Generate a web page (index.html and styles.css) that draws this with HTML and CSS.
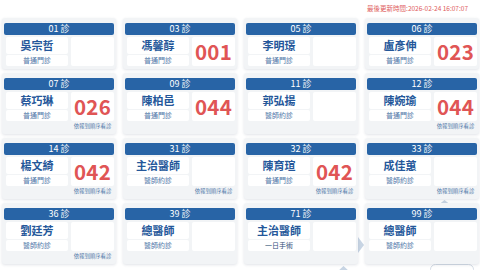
FILE: index.html
```html
<!DOCTYPE html>
<html lang="zh-Hant">
<head>
<meta charset="utf-8">
<title>門診看診進度</title>
<link rel="stylesheet" href="styles.css">
</head>
<body>
<svg class="deco" width="480" height="270" viewBox="0 0 480 270" aria-hidden="true">
  <polygon points="437,206 444.5,200 452,206" fill="#c8d5e4"/>
  <polygon points="358,237 364,245 358,253" fill="#c8d5e4"/>
  <polygon points="337,272 343.5,266 350,272" fill="#c8d5e4"/>
  <rect x="430.5" y="264.5" width="43" height="14" rx="5" fill="none" stroke="#d6dde6"/>
</svg>
<div class="topbar"><span class="updated">最後更新時間:2026-02-24 16:07:07</span></div>
<main class="grid">
  <section class="card"><div class="head">01 診</div><div class="body"><div class="name">吳宗哲</div><div class="type">普通門診</div><div class="num"></div></div></section>
  <section class="card"><div class="head">03 診</div><div class="body"><div class="name">馮馨醇</div><div class="type">普通門診</div><div class="num">001</div></div></section>
  <section class="card"><div class="head">05 診</div><div class="body"><div class="name">李明璟</div><div class="type">普通門診</div><div class="num"></div></div></section>
  <section class="card"><div class="head">06 診</div><div class="body"><div class="name">盧彥伸</div><div class="type">普通門診</div><div class="num">023</div></div></section>

  <section class="card"><div class="head">07 診</div><div class="body"><div class="name">蔡巧琳</div><div class="type">普通門診</div><div class="num">026</div></div><div class="note">依報到順序看診</div></section>
  <section class="card"><div class="head">09 診</div><div class="body"><div class="name">陳柏邑</div><div class="type">普通門診</div><div class="num">044</div></div></section>
  <section class="card"><div class="head">11 診</div><div class="body"><div class="name">郭弘揚</div><div class="type">醫師約診</div><div class="num"></div></div></section>
  <section class="card"><div class="head">12 診</div><div class="body"><div class="name">陳婉瑜</div><div class="type">普通門診</div><div class="num">044</div></div><div class="note">依報到順序看診</div></section>

  <section class="card"><div class="head">14 診</div><div class="body"><div class="name">楊文綺</div><div class="type">普通門診</div><div class="num">042</div></div><div class="note">依報到順序看診</div></section>
  <section class="card"><div class="head">31 診</div><div class="body"><div class="name">主治醫師</div><div class="type">醫師約診</div><div class="num"></div></div><div class="note">依報到順序看診</div></section>
  <section class="card"><div class="head">32 診</div><div class="body"><div class="name">陳育瑄</div><div class="type">普通門診</div><div class="num">042</div></div><div class="note">依報到順序看診</div></section>
  <section class="card"><div class="head">33 診</div><div class="body"><div class="name">成佳蕙</div><div class="type">醫師約診</div><div class="num"></div></div><div class="note">依報到順序看診</div></section>

  <section class="card"><div class="head">36 診</div><div class="body"><div class="name">劉廷芳</div><div class="type">醫師約診</div><div class="num"></div></div><div class="note">依報到順序看診</div></section>
  <section class="card"><div class="head">39 診</div><div class="body"><div class="name">總醫師</div><div class="type">醫師約診</div><div class="num"></div></div></section>
  <section class="card"><div class="head">71 診</div><div class="body"><div class="name">主治醫師</div><div class="type dark">一日手術</div><div class="num"></div></div></section>
  <section class="card"><div class="head">99 診</div><div class="body"><div class="name">總醫師</div><div class="type">醫師約診</div><div class="num"></div></div></section>
</main>
</body>
</html>
```

FILE: styles.css
```css
* { box-sizing: border-box; }
html, body { margin: 0; padding: 0; }
body {
  width: 480px;
  height: 270px;
  overflow: hidden;
  background: #ffffff;
  font-family: "Noto Sans CJK TC", "Noto Sans", sans-serif;
  position: relative;
}
.deco {
  position: absolute;
  left: 0;
  top: 0;
  z-index: 0;
}
.topbar {
  position: relative;
  z-index: 1;
  height: 18px;
  padding: 4px 12px 0 0;
  display: flex;
  justify-content: flex-end;
}
.updated {
  font-size: 6.5px;
  line-height: 8px;
  color: #e05d5d;
}
.grid {
  position: relative;
  z-index: 1;
  display: grid;
  grid-template-columns: repeat(4, 114px);
  column-gap: 7px;
  row-gap: 4px;
  padding: 0 0 0 2px;
}
.card {
  background: #f2f4f6;
  border-radius: 3px;
  box-shadow: 0 1px 3px rgba(40, 60, 90, 0.14);
  padding: 5px 2px 3px 2px;
  display: flex;
  flex-direction: column;
}
.head {
  height: 12px;
  background: #2864a6;
  border-radius: 2px;
  color: #ffffff;
  font-size: 9px;
  line-height: 12px;
  text-align: center;
}
.body {
  margin-top: 2px;
  padding-left: 2px;
  display: grid;
  grid-template-columns: 62px 43px;
  grid-template-rows: 17px 11px;
  column-gap: 3px;
  row-gap: 1px;
}
.name {
  background: #ffffff;
  border-radius: 2px;
  color: #24579a;
  font-weight: 700;
  font-size: 11px;
  line-height: 17px;
  text-align: center;
}
.type {
  background: #ffffff;
  border-radius: 2px;
  color: #4f77a8;
  font-size: 7px;
  line-height: 11px;
  text-align: center;
}
.type.dark { color: #2e4f78; }
.num {
  grid-column: 2;
  grid-row: 1 / 3;
  background: #ffffff;
  border-radius: 2px;
  color: #e05555;
  font-weight: 700;
  font-size: 20.5px;
  line-height: 29px;
  text-align: center;
  letter-spacing: 0.3px;
}
.note {
  height: 10px;
  padding-left: 67px;
  font-size: 5.4px;
  line-height: 10px;
  color: #4f77a8;
  text-align: center;
}
```
